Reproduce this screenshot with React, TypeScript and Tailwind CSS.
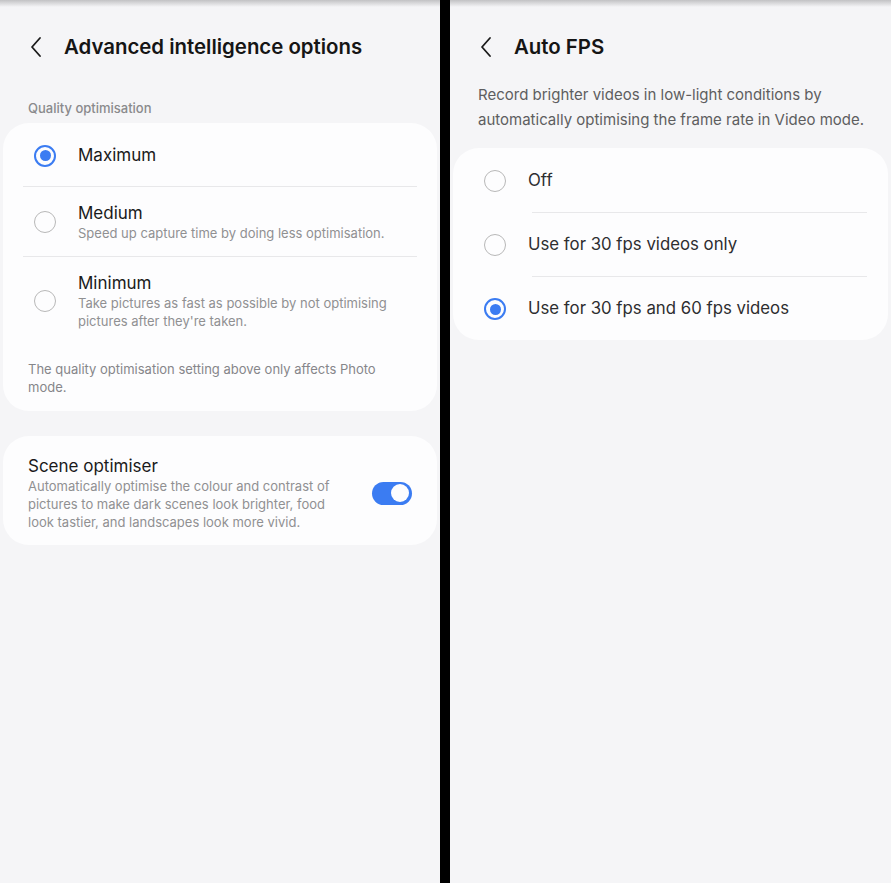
import React from 'react'

const font = { fontFamily: 'Inter, "Noto Sans", sans-serif' }

function Chevron() {
  return (
    <svg width="14" height="22" viewBox="0 0 14 22" fill="none">
      <path d="M11 2 L3 11 L11 20" stroke="#1a1a1a" strokeWidth="1.8" strokeLinecap="round" strokeLinejoin="round" />
    </svg>
  )
}

function Radio({ checked }: { checked?: boolean }) {
  if (checked) {
    return (
      <div className="w-[22px] h-[22px] shrink-0 rounded-full border-[2.5px] border-[#3b7cf2] flex items-center justify-center">
        <div className="w-[11px] h-[11px] rounded-full bg-[#3b7cf2]" />
      </div>
    )
  }
  return <div className="w-[22px] h-[22px] shrink-0 rounded-full border-[1.5px] border-[#b8b8b8]" />
}

function Header({ title }: { title: string }) {
  return (
    <div className="h-[94px] flex items-center pl-[29px] gap-[21px]">
      <Chevron />
      <h1 className="text-[20.4px] font-semibold text-[#151515]">{title}</h1>
    </div>
  )
}

function Divider({ className }: { className: string }) {
  return <div className={`h-px bg-[#e8e8ea] ${className}`} />
}

export default function App() {
  return (
    <div style={font} className="w-[891px] h-[883px] flex bg-black overflow-hidden">
      {/* Left screen */}
      <div className="w-[440px] h-full bg-[linear-gradient(to_bottom,#c2c2c4,#f5f5f7_7px)]">
        <Header title="Advanced intelligence options" />
        <div className="pt-[6px] pl-[28px] text-[13px] leading-[16px] font-medium text-[#8a8a8c]">Quality optimisation</div>

        <div className="mt-[7px] mx-[3px] rounded-[26px] bg-[#fdfdfe] pb-[15px]">
          <div className="h-[63px] pt-[2px] flex items-center pl-[31px] gap-[22px]">
            <Radio checked />
            <span className="text-[17px] text-[#1a1a1a]">Maximum</span>
          </div>
          <Divider className="mx-[20px]" />
          <div className="flex items-center pl-[31px] gap-[22px] pt-[15px] pb-[14px]">
            <Radio />
            <div>
              <div className="text-[17px] leading-[22px] text-[#1a1a1a]">Medium</div>
              <div className="text-[13px] leading-[18px] text-[#909092]">Speed up capture time by doing less optimisation.</div>
            </div>
          </div>
          <Divider className="mx-[20px]" />
          <div className="flex items-center pl-[31px] gap-[22px] pt-[15px]">
            <Radio />
            <div className="w-[320px]">
              <div className="text-[17px] leading-[22px] text-[#1a1a1a]">Minimum</div>
              <div className="text-[13px] leading-[18px] text-[#909092]">Take pictures as fast as possible by not optimising pictures after they're taken.</div>
            </div>
          </div>
          <p className="mt-[30px] px-[25px] pr-[60px] text-[13px] leading-[18px] text-[#86868a]">
            The quality optimisation setting above only affects Photo mode.
          </p>
        </div>

        <div className="mt-[25px] mx-[3px] rounded-[26px] bg-[#fdfdfe] pt-[19px] pb-[14px] pl-[25px] pr-[25px] flex items-center justify-between">
          <div className="w-[306px]">
            <div className="text-[17px] leading-[22px] text-[#1a1a1a]">Scene optimiser</div>
            <div className="text-[13px] leading-[18px] text-[#909092]">
              Automatically optimise the colour and contrast of pictures to make dark scenes look brighter, food look tastier, and landscapes look more vivid.
            </div>
          </div>
          <div className="w-[40px] h-[23px] rounded-full bg-[#3b7cf2] flex items-center justify-end pr-[3px]">
            <div className="w-[18px] h-[18px] rounded-full bg-[#fdfdfe]" />
          </div>
        </div>
      </div>

      <div className="w-[10px] h-full bg-black" />

      {/* Right screen */}
      <div className="flex-1 h-full bg-[linear-gradient(to_bottom,#c2c2c4,#f5f5f7_7px)]">
        <Header title="Auto FPS" />
        <p className="-mt-[12.5px] pl-[28px] pr-[20px] text-[15px] leading-[25px] text-[#5e5e60]">
          Record brighter videos in low-light conditions by automatically optimising the frame rate in Video mode.
        </p>

        <div className="mt-[16.5px] mx-[3px] rounded-[26px] bg-[#fdfdfe]">
          <div className="h-[64px] pt-[1px] flex items-center pl-[31px] gap-[22px]">
            <Radio />
            <span className="text-[16.8px] text-[#2e2e30]">Off</span>
          </div>
          <Divider className="ml-[79px] mr-[21px]" />
          <div className="h-[63px] pt-[1px] flex items-center pl-[31px] gap-[22px]">
            <Radio />
            <span className="text-[16.8px] text-[#2e2e30]">Use for 30 fps videos only</span>
          </div>
          <Divider className="ml-[79px] mr-[21px]" />
          <div className="h-[63px] pt-[1px] flex items-center pl-[31px] gap-[22px]">
            <Radio checked />
            <span className="text-[16.8px] text-[#2e2e30]">Use for 30 fps and 60 fps videos</span>
          </div>
        </div>
      </div>
    </div>
  )
}
